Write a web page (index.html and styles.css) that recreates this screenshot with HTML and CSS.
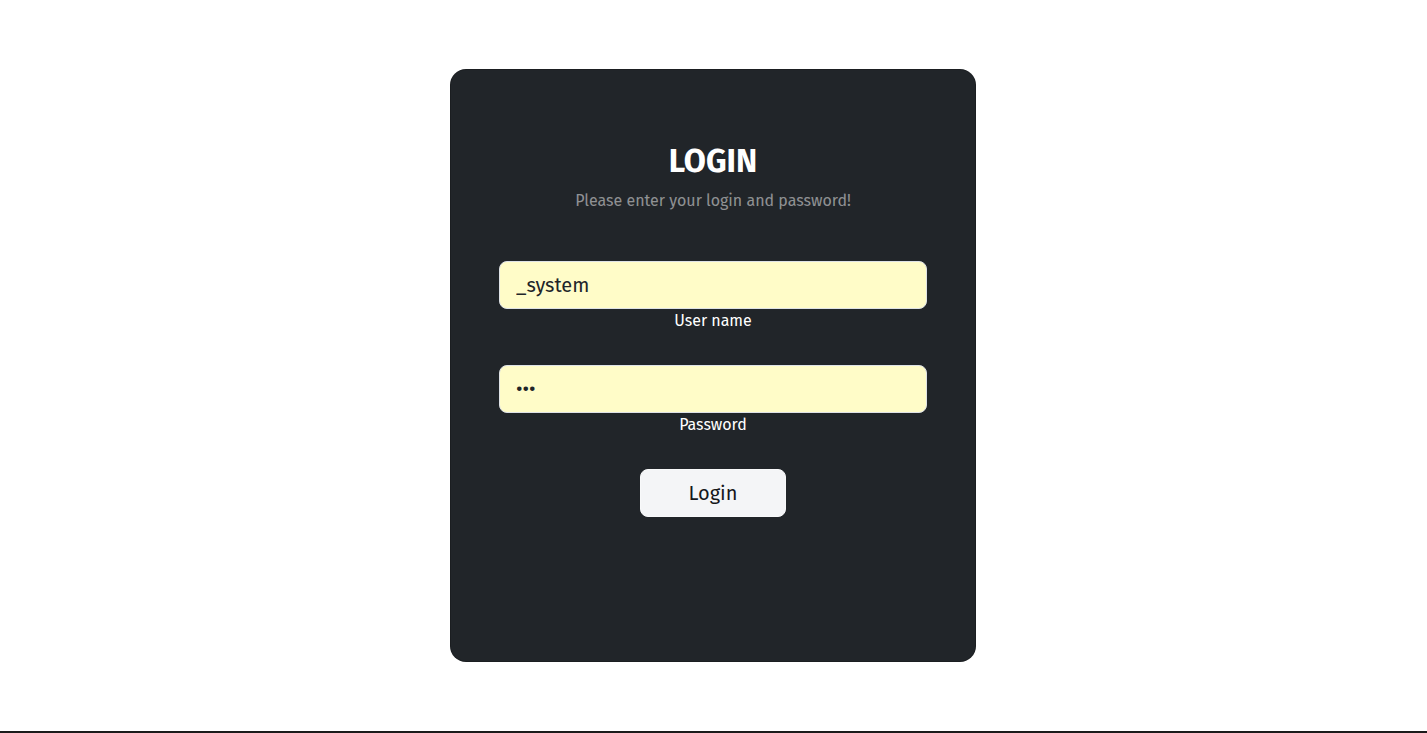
FILE: index.html
```html
<!DOCTYPE html>
<html lang="en">
<head>
  <meta charset="UTF-8">
  <title>Login</title>
  <link rel="stylesheet" href="styles.css">
</head>
<body>

  <section class="login-page">
    <div class="card">
      <div class="card-body">
        <div class="card-inner">
          <h2 class="title">Login</h2>
          <p class="subtitle">Please enter your login and password!</p>

          <form class="login-form">
            <div class="form-field">
              <input type="text" id="username" class="field-input" value="_system">
              <label for="username" class="field-label">User name</label>
            </div>

            <div class="form-field">
              <input type="password" id="password" class="field-input" value="abc">
              <label for="password" class="field-label">Password</label>
            </div>

            <button type="submit" class="login-btn">Login</button>
          </form>
        </div>
      </div>
    </div>
  </section>

  <footer class="footer">
    <p>Made with care by the database team. All rights reserved. Version information and support links below.</p>
  </footer>

</body>
</html>
```

FILE: styles.css
```css
* {
  box-sizing: border-box;
}

body {
  margin: 0;
  font-family: "Fira Sans", "Noto Sans", "Open Sans", sans-serif;
  background-color: #ffffff;
  color: #212529;
}

.login-page {
  height: 731px;
  padding: 48px 1px 48px 0;
  display: flex;
  justify-content: center;
  align-items: center;
}

.card {
  width: 526px;
  background-color: #212529;
  border: 1px solid rgba(0, 0, 0, 0.175);
  border-radius: 16px;
  color: #fff;
}

.card-body {
  padding: 48px;
  text-align: center;
}

.card-inner {
  margin: 24px 0 48px;
  padding-bottom: 48px;
}

.title {
  margin: 0 0 8px;
  font-size: 32px;
  line-height: 1.2;
  font-weight: 700;
  text-transform: uppercase;
}

.subtitle {
  margin: 0 0 48px;
  font-size: 16px;
  line-height: 24px;
  color: rgba(255, 255, 255, 0.5);
}

.form-field {
  display: flex;
  flex-direction: column;
  margin-bottom: 24px;
}

.field-input {
  display: block;
  width: 100%;
  height: 48px;
  padding: 8px 16px;
  font-family: inherit;
  font-size: 20px;
  line-height: 30px;
  color: #212529;
  background-color: #fffcc8;
  border: 1px solid #dee2e6;
  border-radius: 8px;
  outline: none;
}

.field-label {
  display: block;
  margin-bottom: 8px;
  font-size: 16px;
  line-height: 24px;
  color: #fff;
}

.login-btn {
  height: 48px;
  padding: 8px 48px;
  font-family: inherit;
  font-size: 20px;
  line-height: 30px;
  color: #16181b;
  background-color: #f4f5f7;
  border: 1px solid #f8f9fa;
  border-radius: 8px;
  cursor: pointer;
}

.footer {
  background-color: #1b1b1b;
  color: #9a9a9a;
  padding: 2px 0 10px 368px;
  font-size: 12px;
}

.footer p {
  margin: 0;
}
```
